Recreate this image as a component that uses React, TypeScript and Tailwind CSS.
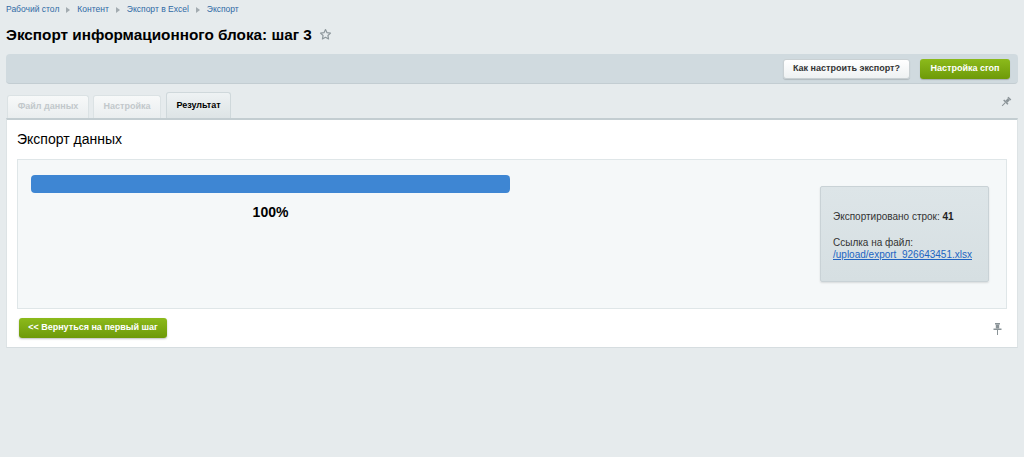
import React from "react";

function Star() {
  return (
    <svg width="13" height="13" viewBox="0 0 24 24" fill="none" stroke="#8d979c" strokeWidth="2.2" strokeLinejoin="round">
      <path d="M12 2.8l2.8 5.9 6.4.8-4.7 4.4 1.2 6.4L12 17.2l-5.7 3.1 1.2-6.4-4.7-4.4 6.4-.8z" />
    </svg>
  );
}

function PinDiag() {
  return (
    <svg width="12" height="12" viewBox="0 0 12 12">
      <g transform="rotate(45 6 6)" fill="#8a9397">
        <rect x="4" y="0.5" width="4" height="1.5" />
        <rect x="4.6" y="2" width="2.8" height="3.5" />
        <rect x="3" y="5.5" width="6" height="1.5" />
        <rect x="5.5" y="7" width="1" height="4.5" />
      </g>
    </svg>
  );
}

function PinDown() {
  return (
    <svg width="9" height="12" viewBox="0 0 9 12" fill="#8a9397">
      <rect x="2" y="0" width="5" height="1.5" />
      <rect x="2.8" y="1.5" width="3.4" height="4" />
      <rect x="0.5" y="5.5" width="8" height="1.5" />
      <rect x="4" y="7" width="1" height="5" />
    </svg>
  );
}

function Sep() {
  return (
    <svg className="mx-[7px]" width="4" height="6" viewBox="0 0 4 6" fill="#a2abb0">
      <path d="M0 0L4 3L0 6z" />
    </svg>
  );
}

export default function App() {
  return (
    <div className="min-h-screen bg-[#e6ebed] px-[6px] text-[#000]" style={{ fontFamily: '"Liberation Sans", Arial, sans-serif' }}>
      {/* breadcrumb */}
      <div className="flex items-center h-[19px] text-[8.5px] text-[#2f6aa5]">
        <span>Рабочий стол</span>
        <Sep />
        <span>Контент</span>
        <Sep />
        <span>Экспорт в Excel</span>
        <Sep />
        <span>Экспорт</span>
      </div>
      {/* title */}
      <div className="flex items-center h-[31px] gap-[7px]">
        <h1 className="text-[15.3px] font-bold leading-none text-[#000]">Экспорт информационного блока: шаг 3</h1>
        <Star />
      </div>
      {/* toolbar */}
      <div className="mt-[4px] h-[30px] rounded-[4px] bg-[#d0dadf] border-b border-[#c3cdd2] flex items-center justify-end pr-[8px] gap-[10px]">
        <button className="h-[20px] w-[127px] rounded-[3px] bg-gradient-to-b from-[#ffffff] to-[#eef1f2] border border-[#c9d0d3] shadow-[0_1px_1px_rgba(0,0,0,0.15)] text-[9px] font-bold text-[#333]">
          Как настроить экспорт?
        </button>
        <button className="h-[20px] w-[90px] rounded-[3px] bg-gradient-to-b from-[#8cba1b] to-[#6e9a08] shadow-[0_1px_1px_rgba(0,0,0,0.2)] text-[9px] font-bold text-white">
          Настройка cгоп
        </button>
      </div>
      {/* tabs */}
      <div className="mt-[8px] flex items-end h-[26px] pl-[1px]">
        <div className="h-[23px] w-[82px] rounded-t-[3px] bg-gradient-to-b from-[#f7f9f9] to-[#eaeeef] border border-b-0 border-[#dbe2e4] flex items-center justify-center text-[9px] font-bold text-[#c2c8cb]">
          Файл данных
        </div>
        <div className="ml-[4px] h-[23px] w-[68px] rounded-t-[3px] bg-gradient-to-b from-[#f7f9f9] to-[#eaeeef] border border-b-0 border-[#dbe2e4] flex items-center justify-center text-[9px] font-bold text-[#c2c8cb]">
          Настройка
        </div>
        <div className="ml-[5px] h-[26px] w-[65px] rounded-t-[3px] bg-gradient-to-b from-[#eef2f3] to-[#dde4e6] border border-b-0 border-[#cfd8db] flex items-center justify-center text-[9px] font-bold text-[#000]">
          Результат
        </div>
        <div className="flex-1" />
        <div className="self-start mt-[4px] mr-[6px]">
          <PinDiag />
        </div>
      </div>
      {/* panel */}
      <div className="bg-white border-t-2 border-[#c3cdd1] border-x border-b border-x-[#dde3e5] border-b-[#d6dde0] pt-[10px] pb-[9px] px-[10px]">
        <div className="text-[14px] leading-[18px] text-[#000]">Экспорт данных</div>
        <div className="mt-[11px] h-[150px] bg-[#f5f8f9] border border-[#dfe6e8] flex items-center justify-between pl-[13px] pr-[17px]">
          <div className="self-start mt-[15px] w-[479px] flex flex-col items-center">
            <div className="w-full h-[18px] rounded-[4px] bg-[#3e86d3]" />
            <div className="mt-[11px] text-[14px] font-bold leading-[16px]">100%</div>
          </div>
          <div className="w-[169px] h-[96px] rounded-[2px] bg-gradient-to-b from-[#dde5e8] to-[#d6dfe2] border border-[#c9d2d6] shadow-[0_1px_2px_rgba(0,0,0,0.12)] pl-[12px] pt-[24px] text-[10px] leading-[12px] text-[#333]">
            <div>
              Экспортировано строк: <b className="text-[#222]">41</b>
            </div>
            <div className="mt-[14px]">Ссылка на файл:</div>
            <div>
              <a href="#" className="underline text-[#2164c2]">/upload/export_926643451.xlsx</a>
            </div>
          </div>
        </div>
        <div className="mt-[9px] flex items-center justify-between pl-[2px] pr-[5px]">
          <button className="h-[20px] w-[148px] rounded-[3px] bg-gradient-to-b from-[#8cba1b] to-[#6e9a08] shadow-[0_1px_2px_rgba(0,0,0,0.25)] text-[9px] font-bold text-white">
            &lt;&lt; Вернуться на первый шаг
          </button>
          <div className="mt-[2px]">
            <PinDown />
          </div>
        </div>
      </div>
    </div>
  );
}
